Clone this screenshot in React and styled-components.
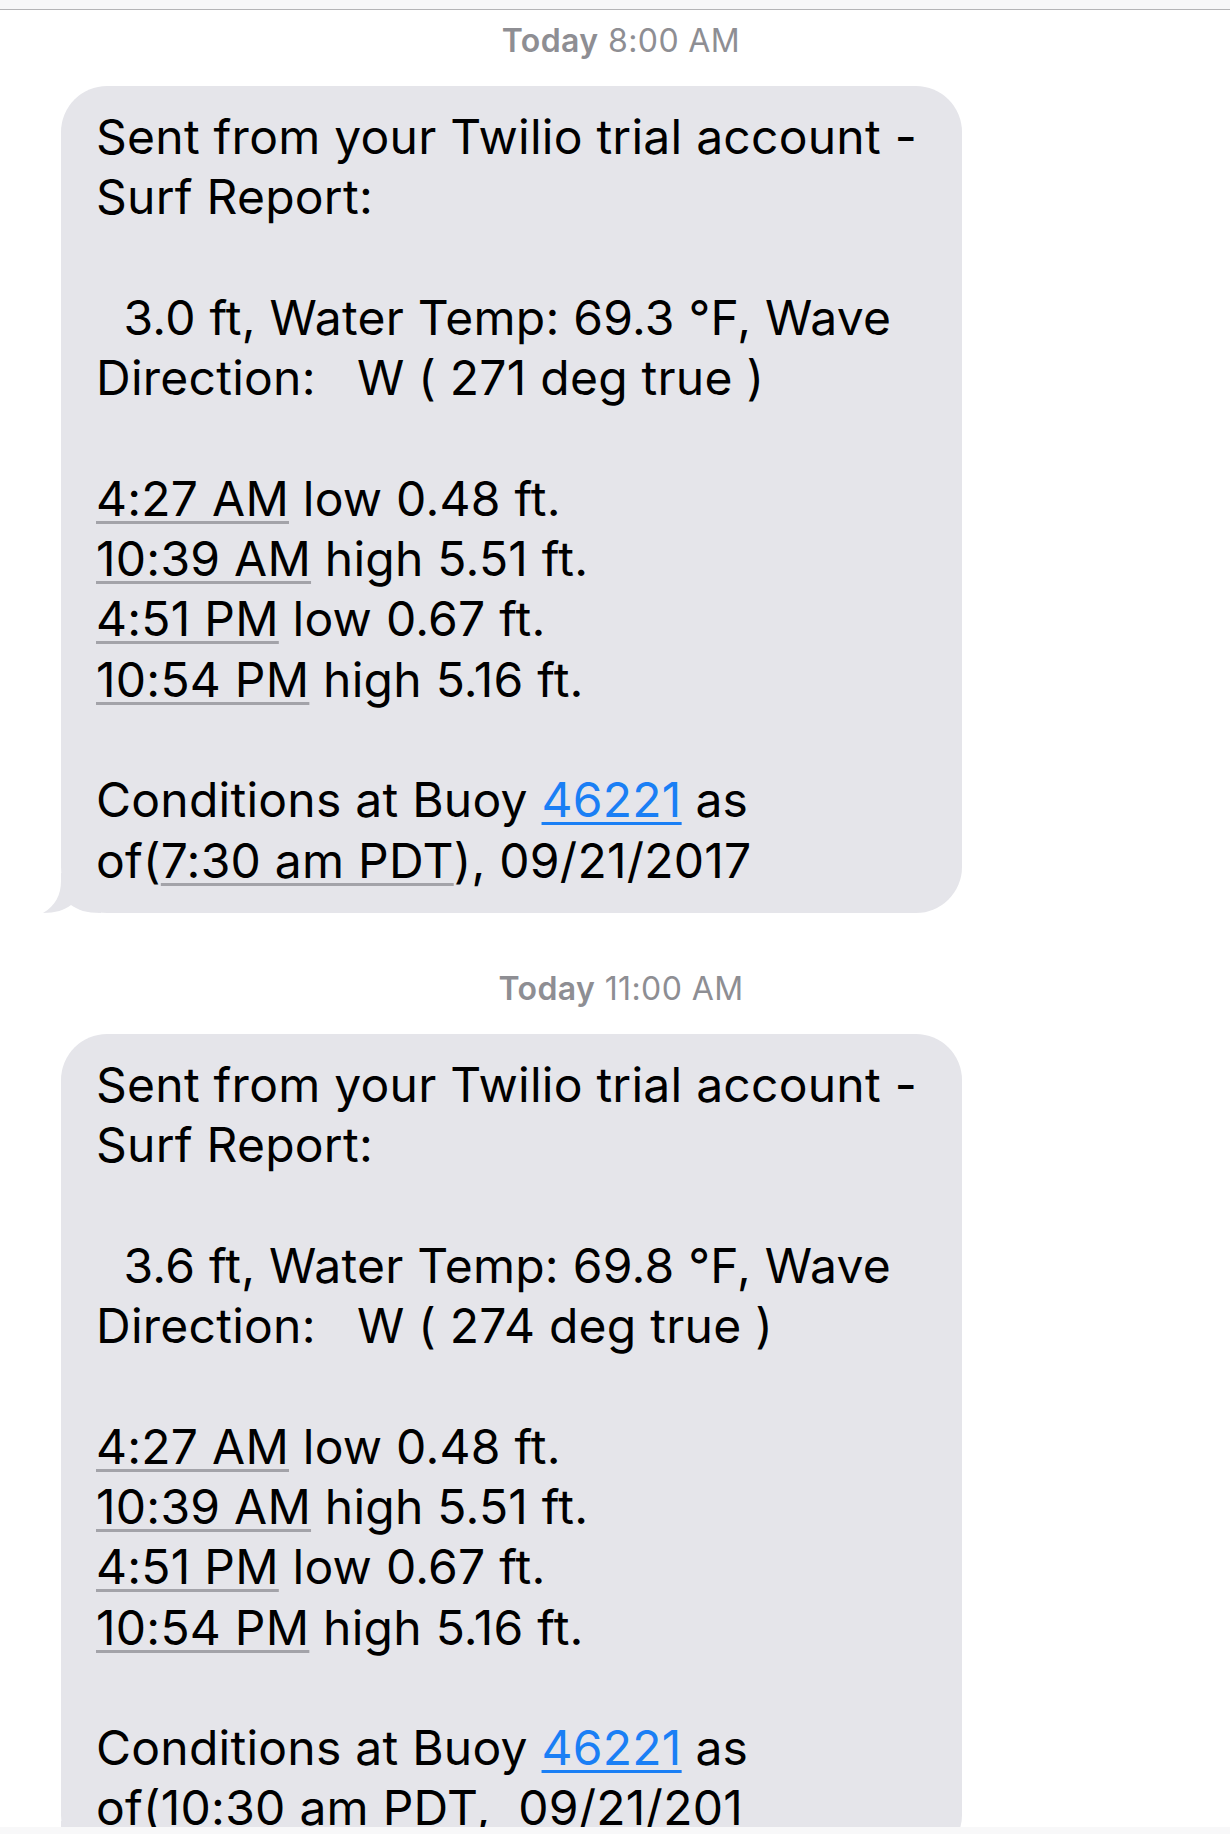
import React from "react";
import styled, { createGlobalStyle } from "styled-components";

const Global = createGlobalStyle`
  html, body { margin: 0; padding: 0; background: #ffffff; }
  body { font-family: Inter, "Noto Sans", "Liberation Sans", sans-serif; -webkit-font-smoothing: antialiased; }
`;

const Page = styled.div`
  width: 1230px;
  height: 1834px;
  display: flex;
  flex-direction: column;
  overflow: hidden;
  background: #ffffff;
`;

const TopBar = styled.div`
  flex: 0 0 9px;
  background: #f7f7f8;
  border-bottom: 1px solid #b4b4b6;
`;

const BottomBar = styled.div`
  flex: 0 0 7px;
  background: #f8f8f9;
`;

const Thread = styled.div`
  flex: 1 1 auto;
  overflow: hidden;
  display: flex;
  flex-direction: column;
`;

const Group = styled.section`
  display: flex;
  flex-direction: column;
  margin-top: ${(p) => (p.$first ? "11px" : "56px")};
`;

const Stamp = styled.div`
  text-align: center;
  padding-left: 12px;
  font-size: 32px;
  letter-spacing: 0.4px;
  line-height: 40px;
  color: #8e8e93;
  margin-bottom: 25px;
  b { font-weight: 600; }
`;

const BubbleRow = styled.div`
  display: flex;
  padding-left: 61px;
`;

const Bubble = styled.div`
  position: relative;
  width: 901px;
  box-sizing: border-box;
  padding: 21px 20px 22px 35px;
  background: #e5e5ea;
  border-radius: 46px;
  color: #000000;
  font-size: 48px;
  letter-spacing: 0.25px;
  line-height: 60.3px;
`;

const Line = styled.div`
  white-space: pre;
  min-height: 60.3px;
`;

const Detected = styled.span`
  text-decoration: underline;
  text-decoration-color: #a3a3a9;
  text-decoration-thickness: 3px;
  text-underline-offset: 5px;
`;

const Link = styled.span`
  color: #1a7ff5;
  text-decoration: underline;
  text-decoration-color: #1a7ff5;
  text-decoration-thickness: 3px;
  text-underline-offset: 5px;
`;

const Tail = styled.svg`
  position: absolute;
  left: -20px;
  bottom: 0;
  width: 60px;
  height: 40px;
`;

const tides = [
  ["4:27 AM", "low 0.48 ft."],
  ["10:39 AM", "high 5.51 ft."],
  ["4:51 PM", "low 0.67 ft."],
  ["10:54 PM", "high 5.16 ft."],
];

const messages = [
  { time: "8:00 AM", ft: "3.0", temp: "69.3", deg: "271", asOf: "7:30 am PDT", tail: "), 09/21/2017" },
  { time: "11:00 AM", ft: "3.6", temp: "69.8", deg: "274", asOf: "10:30 am PDT", tail: ",  09/21/201" },
];

function Message({ m, first }) {
  return (
    <Group $first={first}>
      <Stamp>
        <b>Today</b> {m.time}
      </Stamp>
      <BubbleRow>
        <Bubble>
          <Line>Sent from your Twilio trial account -</Line>
          <Line>Surf Report:</Line>
          <Line> </Line>
          <Line>{`  ${m.ft} ft, Water Temp: ${m.temp} °F, Wave`}</Line>
          <Line>{`Direction:   W ( ${m.deg} deg true )`}</Line>
          <Line> </Line>
          {tides.map(([t, rest]) => (
            <Line key={t}>
              <Detected>{t}</Detected> {rest}
            </Line>
          ))}
          <Line> </Line>
          <Line>
            Conditions at Buoy <Link>46221</Link> as
          </Line>
          <Line>
            of(<Detected>{m.asOf}</Detected>
            {m.tail}
          </Line>
          <Tail viewBox="0 0 60 40">
            <path
              d="M20 0 L20 8 C20 22 14 33 2 40 C14 40 24 37 30 32 C37 37 45 40 60 40 L60 0 Z"
              fill="#e5e5ea"
            />
          </Tail>
        </Bubble>
      </BubbleRow>
    </Group>
  );
}

export default function App() {
  return (
    <>
      <Global />
      <Page>
        <TopBar />
        <Thread>
          {messages.map((m, i) => (
            <Message key={m.time} m={m} first={i === 0} />
          ))}
        </Thread>
        <BottomBar />
      </Page>
    </>
  );
}
